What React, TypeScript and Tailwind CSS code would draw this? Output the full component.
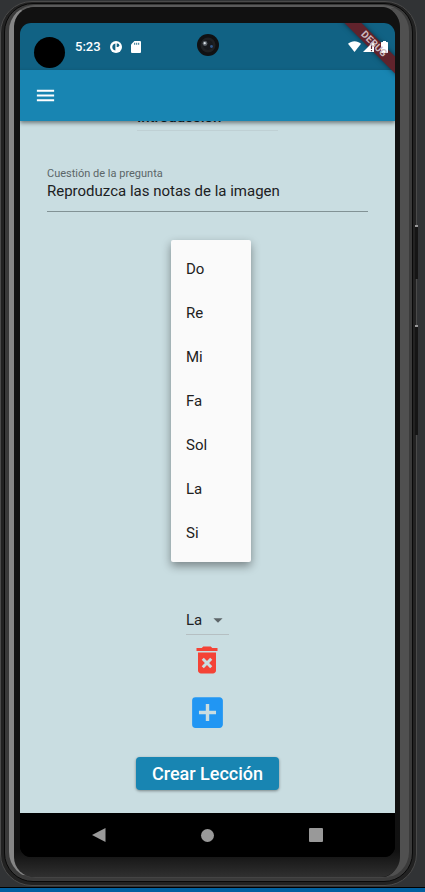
import React from "react";
import { MdAddBox, MdArrowDropDown, MdDeleteForever, MdMenu } from "react-icons/md";

const notes = ["Do", "Re", "Mi", "Fa", "Sol", "La", "Si"];

function StatusBar() {
  return (
    <div className="flex h-[47px] items-center bg-[#116284] pr-[7px] pl-[55px] text-white">
      <span className="text-[13px] font-medium">5:23</span>
      <svg className="ml-[9px] size-3" viewBox="0 0 12 12" aria-hidden="true">
        <circle cx="6" cy="6" r="6" fill="white" />
        <path d="M5.400 2.400v7.200C3.200 9.200 2.300 7.700 2.300 6s1.100-3.300 3.100-3.600z" fill="#116284" />
        <path d="M6.700 2.600h.9a1.700 1.700 0 0 1 0 3.400h-.9z" fill="#116284" />
      </svg>
      <svg className="ml-[9px] h-3 w-[10px]" viewBox="0 0 10 12" aria-hidden="true">
        <path d="M3.400 0H9a1 1 0 0 1 1 1v10a1 1 0 0 1-1 1H1a1 1 0 0 1-1-1V3.600z" fill="white" />
        <path d="M3.700 1.800v2M5.700 1.800v2M7.700 1.800v2" stroke="#116284" strokeWidth="0.9" />
      </svg>
      <div className="relative z-20 ml-auto flex items-center">
        <svg className="h-[11px] w-[13px]" viewBox="0 0 13 11" aria-hidden="true">
          <path d="M6.500 11 0 2.800C3.600 -.6 9.400 -.6 13 2.800z" fill="white" />
        </svg>
        <svg className="ml-[2px] size-[11px]" viewBox="0 0 11 11" aria-hidden="true">
          <path d="M0 11 11 0v11z" fill="white" />
          <path d="M8.500 3.500v4.500M8.500 9v1.200" stroke="#5c2530" strokeWidth="1.200" />
        </svg>
        <svg className="ml-[7px] h-3 w-[7px]" viewBox="0 0 7 12" aria-hidden="true">
          <path d="M2 0h3v1h1.300q.7 0 .7.700v9.600q0 .7-.7.700H.7q-.7 0-.7-.7V1.700Q0 1 .7 1H2z" fill="white" />
        </svg>
      </div>
    </div>
  );
}

function NotePicker() {
  return (
    <div className="relative">
      <div className="relative flex h-[29px] w-[43px] items-center border-b border-[#b5bfc2]">
        <select
          aria-label="Nota"
          defaultValue="La"
          className="h-full w-full appearance-none bg-transparent text-[15px] text-[#1f2325] outline-none"
        >
          {notes.map((note) => (
            <option key={note}>{note}</option>
          ))}
        </select>
        <MdArrowDropDown className="pointer-events-none absolute right-0 size-[22px] text-[#5d6568]" />
      </div>
      <ul
        role="listbox"
        aria-label="Notas"
        className="absolute bottom-full -left-[15px] mb-[44px] w-20 rounded-xs bg-[#fafafa] py-[7px] shadow-[0_4px_10px_rgba(0,0,0,0.4)]"
      >
        {notes.map((note) => (
          <li key={note} role="option" aria-selected={note === "La"}>
            <button type="button" className="flex h-11 w-full items-center px-[15px] text-[15px] text-[#212121]">
              {note}
            </button>
          </li>
        ))}
      </ul>
    </div>
  );
}

function LessonForm() {
  return (
    <main className="flex flex-1 flex-col items-center overflow-hidden bg-[#c9dde1] px-[27px] pb-[23px]">
      <select
        aria-label="Sección"
        className="-mt-[18px] h-7 w-[141px] shrink-0 appearance-none border-b border-[#bfd0d4] bg-transparent pt-0.5 text-[15px] font-medium text-[#12242c] outline-none"
      >
        <option>Introducción</option>
      </select>
      <label htmlFor="question" className="mt-[35px] w-full text-[11px] leading-4 text-[#5b6668]">
        Cuestión de la pregunta
      </label>
      <input
        id="question"
        defaultValue="Reproduzca las notas de la imagen"
        className="h-[30px] w-full border-b border-[#829295] bg-transparent pb-[11px] text-[15px] text-[#1c2123] outline-none"
      />
      <div className="mt-auto flex flex-col items-center pt-[350px]">
        <NotePicker />
        <button type="button" aria-label="Eliminar nota" className="mt-[7px] text-[#f44336]">
          <MdDeleteForever className="size-9" />
        </button>
        <button type="button" aria-label="Añadir nota" className="mt-[14px] text-[#2196f3]">
          <MdAddBox className="size-[41px]" />
        </button>
        <button
          type="button"
          className="mt-6 h-[33px] rounded-[4px] bg-[#1885b2] px-4 text-[18px] font-medium text-white shadow-[0_1px_3px_rgba(0,0,0,0.4)]"
        >
          Crear Lección
        </button>
      </div>
    </main>
  );
}

function NavigationBar() {
  return (
    <nav className="flex h-11 items-center justify-between bg-black px-[72px] text-[#999999]">
      <button type="button" aria-label="Atrás">
        <svg className="size-[14px]" viewBox="0 0 14 14" aria-hidden="true">
          <path d="M0 7 13.500 0v14z" fill="currentColor" />
        </svg>
      </button>
      <button type="button" aria-label="Inicio" className="size-[13px] rounded-full bg-[#999999]" />
      <button type="button" aria-label="Recientes" className="size-[14px] rounded-[1px] bg-[#999999]" />
    </nav>
  );
}

function Screen() {
  return (
    <div className="relative flex flex-1 flex-col overflow-hidden rounded-[11px] bg-black">
      <StatusBar />
      <div className="absolute top-[14px] left-[14px] size-[31px] rounded-full bg-black" />
      <div className="absolute top-[11px] left-1/2 flex size-[22px] -translate-x-1/2 items-center justify-center rounded-full bg-[#101113]">
        <svg className="size-4" viewBox="0 0 16 16" aria-hidden="true">
          <circle cx="8" cy="8" r="7.500" fill="#1f2124" />
          <circle cx="8" cy="8" r="5" fill="#17191d" />
          <circle cx="5" cy="6.500" r="2.400" fill="#5d646b" />
          <circle cx="4.700" cy="6.200" r="1.100" fill="#dfe5ea" />
          <circle cx="11.500" cy="9.500" r="1.400" fill="#31598f" />
        </svg>
      </div>
      <header className="relative z-10 flex h-[51px] items-center bg-[#1885b2] pl-[14px] text-white shadow-[0_2px_4px_rgba(0,0,0,0.45)]">
        <button type="button" aria-label="Menú">
          <MdMenu className="size-[23px]" />
        </button>
      </header>
      <LessonForm />
      <NavigationBar />
      <div className="absolute top-[15px] -right-[19px] z-10 h-3 w-20 rotate-45 bg-[#60232c] shadow-[0_0_5px_rgba(0,0,0,0.5)]" />
      <div className="absolute top-[15px] -right-[19px] z-30 h-3 w-20 rotate-45 text-center text-[10px] leading-3 font-bold text-[#cdb9be]">
        DEBUG
      </div>
    </div>
  );
}

export default function App() {
  return (
    <div className="flex min-h-screen flex-col bg-[#313335] font-[Roboto,sans-serif]">
      <div className="relative mt-px mr-2 flex flex-1 flex-col rounded-[32px] border border-[#4a4a4a] bg-[#222222] pt-px pr-[3px] pb-[3px] pl-[3px]">
        <div className="absolute top-[223px] -right-[2px] h-[54px] w-[3px] border-t-2 border-[#999999] bg-[#151515]" />
        <div className="absolute top-[323px] -right-[2px] h-[110px] w-[3px] border-t-2 border-[#999999] bg-[#151515]" />
        <div className="flex flex-1 flex-col rounded-[29px] border border-[#090909] bg-[#3a3a3a] pt-px pr-[3px] pb-[3px] pl-1">
          <div className="flex flex-1 flex-col rounded-[26px] border-t-2 border-r-[9px] border-b border-l-[5px] border-t-[#5a5a5a] border-r-[#505050] border-b-[#444444] border-l-[#858585] bg-[#131313]">
            <div className="flex flex-1 flex-col rounded-[20px] bg-linear-to-b from-[#111111] from-97% to-[#303030] pt-4 pr-[5px] pb-5 pl-[6px]">
              <Screen />
            </div>
          </div>
        </div>
      </div>
      <footer className="mt-px h-[5px] border-t border-black bg-[#0060a0]" />
    </div>
  );
}
